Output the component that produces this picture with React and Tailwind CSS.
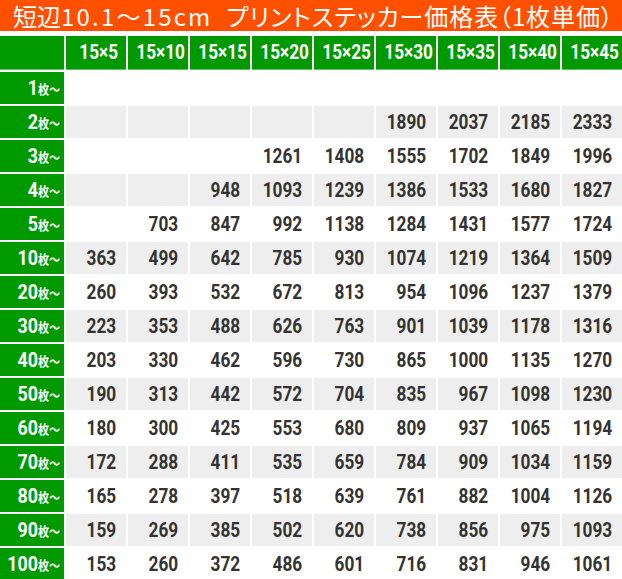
import React from 'react';

const sizes = ['15×5', '15×10', '15×15', '15×20', '15×25', '15×30', '15×35', '15×40', '15×45'];

const rows = [
    { qty: 1, prices: [null, null, null, null, null, null, null, null, null] },
    { qty: 2, prices: [null, null, null, null, null, 1890, 2037, 2185, 2333] },
    { qty: 3, prices: [null, null, null, 1261, 1408, 1555, 1702, 1849, 1996] },
    { qty: 4, prices: [null, null, 948, 1093, 1239, 1386, 1533, 1680, 1827] },
    { qty: 5, prices: [null, 703, 847, 992, 1138, 1284, 1431, 1577, 1724] },
    { qty: 10, prices: [363, 499, 642, 785, 930, 1074, 1219, 1364, 1509] },
    { qty: 20, prices: [260, 393, 532, 672, 813, 954, 1096, 1237, 1379] },
    { qty: 30, prices: [223, 353, 488, 626, 763, 901, 1039, 1178, 1316] },
    { qty: 40, prices: [203, 330, 462, 596, 730, 865, 1000, 1135, 1270] },
    { qty: 50, prices: [190, 313, 442, 572, 704, 835, 967, 1098, 1230] },
    { qty: 60, prices: [180, 300, 425, 553, 680, 809, 937, 1065, 1194] },
    { qty: 70, prices: [172, 288, 411, 535, 659, 784, 909, 1034, 1159] },
    { qty: 80, prices: [165, 278, 397, 518, 639, 761, 882, 1004, 1126] },
    { qty: 90, prices: [159, 269, 385, 502, 620, 738, 856, 975, 1093] },
    { qty: 100, prices: [153, 260, 372, 486, 601, 716, 831, 946, 1061] },
];

// condensed look: Roboto bold squeezed horizontally
const num = "inline-block font-['Roboto',sans-serif] font-bold text-[21px] leading-none scale-x-[0.82]";

const App = () => {
    return (
        <div className="w-[622px] bg-white">
            <div className="h-[31px] bg-[#ff5000] pl-[13px] flex items-center text-white text-[24px] leading-[31px] whitespace-nowrap font-['Noto_Sans_CJK_JP',sans-serif]">
                <span>短辺</span>
                <span className="tracking-[2.2px]">10.1～15cm</span>
                <span className="ml-[14px] tracking-[0.9px] [font-feature-settings:'palt']">プリントステッカー価格表（1枚単価）</span>
            </div>
            <div className="mt-[5px] grid grid-cols-[64px_repeat(9,60px)] gap-[2px]">
                <div className="h-[34px] bg-[#009900] border-b border-[#5fc45f]" />
                {sizes.map((s) => (
                    <div
                        key={s}
                        className="h-[34px] bg-[#009900] border-b border-[#5fc45f] flex items-center justify-center pl-[5px] text-white"
                    >
                        <span className={`${num} origin-center`}>{s}</span>
                    </div>
                ))}

                {rows.map((row, i) => (
                    <React.Fragment key={row.qty}>
                        <div className="h-[32px] bg-[#009900] flex items-center justify-end pr-[4px] text-white whitespace-nowrap">
                            <span className="inline-flex items-center origin-right scale-x-[0.85]">
                                <span className="font-['Roboto',sans-serif] font-bold text-[21px] leading-none">{row.qty}</span>
                                <span className="text-[13px] font-bold leading-none font-['Noto_Sans_CJK_JP',sans-serif]">枚～</span>
                            </span>
                        </div>
                        {row.prices.map((p, j) => (
                            <div
                                key={j}
                                className={`h-[32px] flex items-center justify-end pr-[10px] text-[#333333] ${i % 2 === 1 ? 'bg-[#eeeeee]' : 'bg-white'}`}
                            >
                                {p !== null && <span className={`${num} origin-right`}>{p}</span>}
                            </div>
                        ))}
                    </React.Fragment>
                ))}
            </div>
        </div>
    );
};

export default App;
